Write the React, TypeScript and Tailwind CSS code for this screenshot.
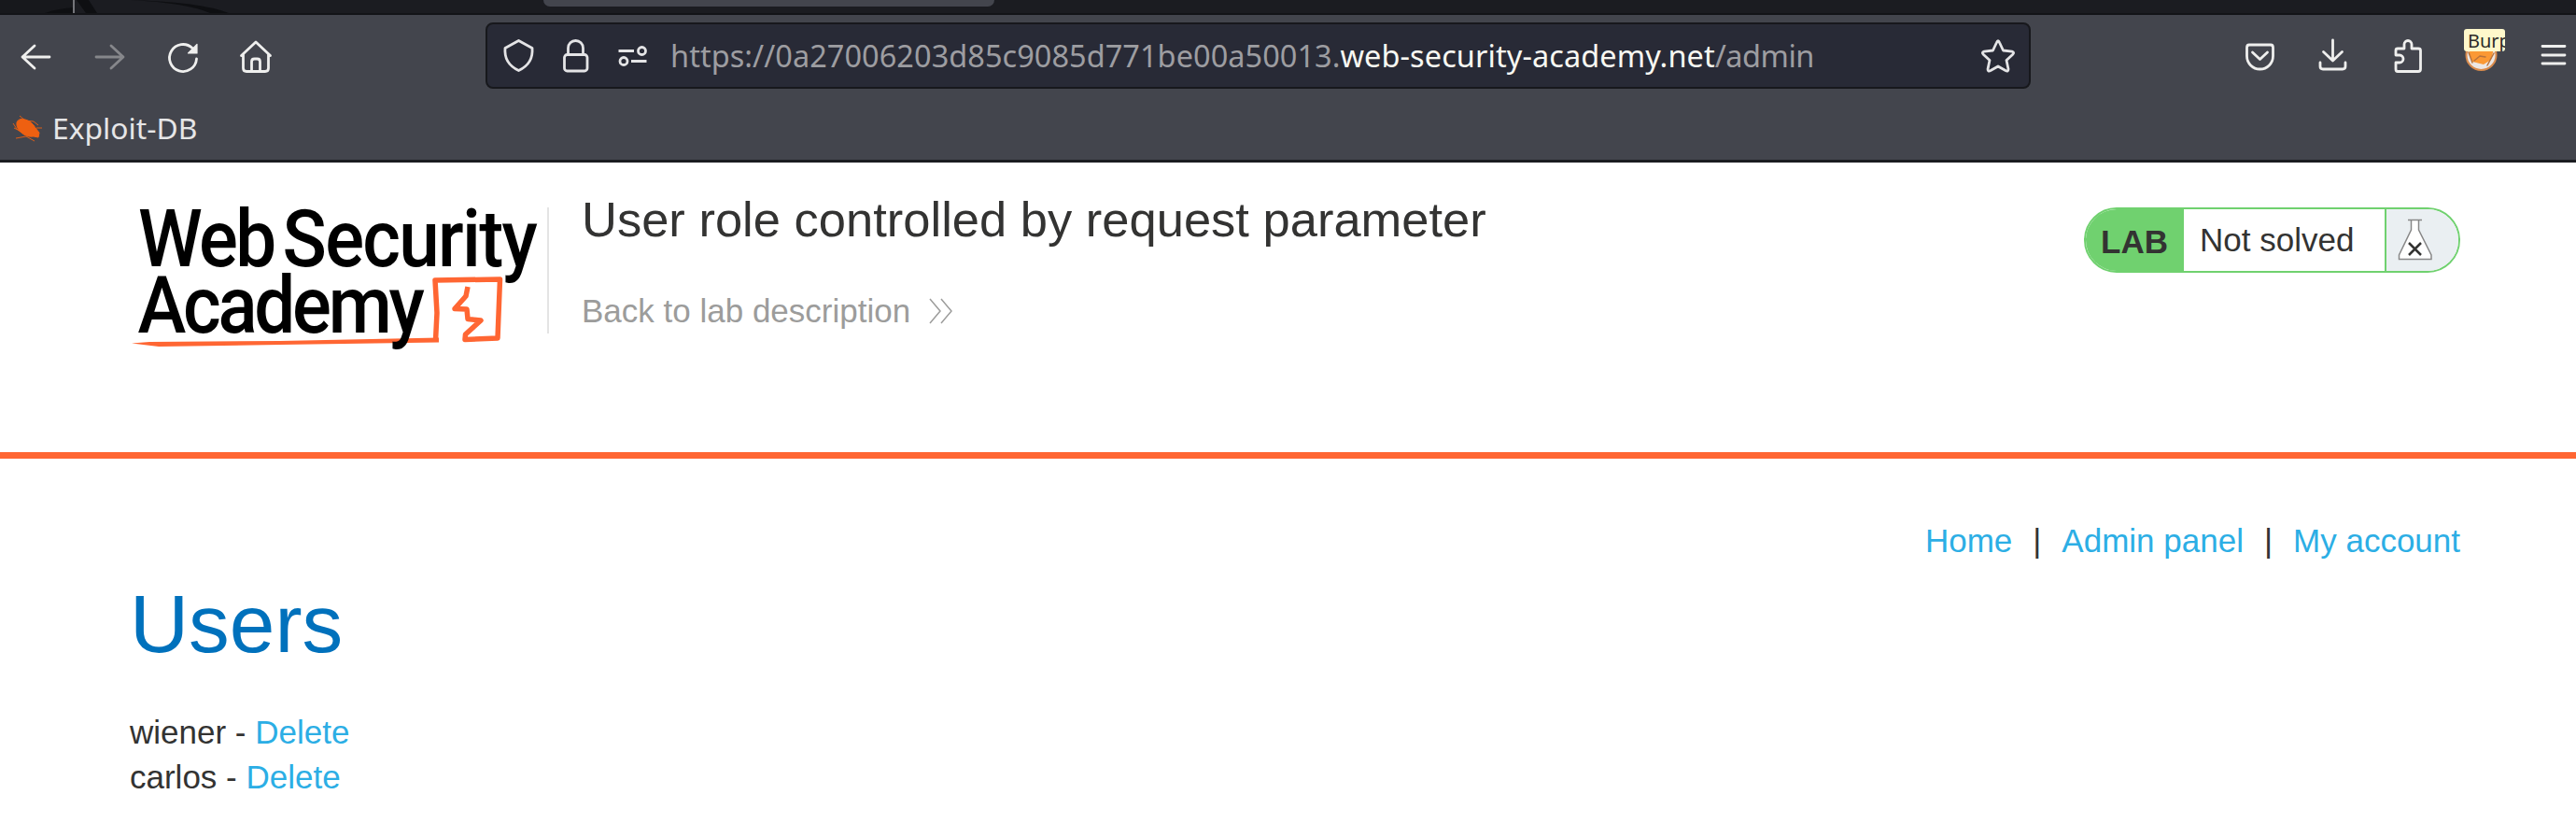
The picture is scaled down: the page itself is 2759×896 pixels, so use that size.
import React from "react";

const ic = "shrink-0 block overflow-visible";

function Logo() {
  return (
    <svg className="block shrink-0 overflow-visible" width="470" height="170" viewBox="130 205 470 170" fontFamily="Roboto, sans-serif" fontWeight="500" fontSize="85" fill="#000">
      <g transform="translate(148 285) scale(0.92 1)">
        <text x="0" y="0" textLength="161" lengthAdjust="spacing">Web</text>
        <text x="168" y="0" textLength="297" lengthAdjust="spacing">Security</text>
      </g>
      <path d="M141 367.500L160 366L300 365L470 361.500V366.500L300 369L170 371Z" fill="#ff6633" />
      <path d="M466.500 364.500L468 335L466 300L535.500 299L533 362L498 363.500L498.500 358L515 343L501 341.500L500 331L487 330.500L499 317L501 307" fill="none" stroke="#ff6633" strokeWidth="5.500" strokeLinejoin="round" />
      <g transform="translate(147.5 355.5) scale(0.92 1)">
        <text x="0" y="0" textLength="334" lengthAdjust="spacing">Academy</text>
      </g>
    </svg>
  );
}

export default function App() {
  return (
    <div className="w-[2759px] h-[896px] overflow-hidden bg-white font-['Liberation_Sans',Arial,sans-serif] text-[#333332]">
      <header className="h-[174px] bg-[#43454d] border-b-[3px] border-[#1b1d21]">
        <div className="h-4 bg-[#1b1c21] border-b-2 border-[#131418] flex">
          <svg className="block shrink-0" width="582" height="14" viewBox="0 0 582 14">
            <path d="M0 0H80V9Q60 10 48 14H0Z" fill="#17181c" />
            <path d="M82 0H95L104 14H92ZM48 14Q62 9 80 8V14ZM140 0Q215 2 245 14H225Q200 3 140 0Z" fill="#0e0f12" />
            <path d="M79 0V14" stroke="#74757a" strokeWidth="2" />
          </svg>
          <div className="w-[483px] h-[7px] bg-[#43454d] rounded-b-lg" />
        </div>
        <div className="mt-2 h-[71px] flex items-center text-[#efefee]">
          <svg className={ic} width="520" height="71" viewBox="0 24 520 71" fill="none" stroke="currentColor" strokeWidth="2.8" strokeLinecap="round" strokeLinejoin="round">
            <path d="M53 61H24M37 49L24 61L37 73" />
            <path d="M103 61H132M119 49L132 61L119 73" stroke="#86878b" />
            <path d="M210.500 63A14.500 14.500 0 1 1 206 51.500" />
            <path d="M211 47.500V57H201.500Z" fill="currentColor" strokeWidth="1.2" />
            <path d="M258.500 59.500L274 45L289.500 59.500M260.500 58V73Q260.500 76.500 264 76.500H284Q287.500 76.500 287.500 73V58M269.500 76V66Q269.500 63 272.500 63H275.500Q278.500 63 278.500 66V76" />
          </svg>
          <div className="w-[1655px] h-[71px] shrink-0 rounded-lg border-2 border-[#17181c] bg-[#282a36] flex items-center">
            <svg className={ic} width="196" height="67" viewBox="522 26 196 67" fill="none" stroke="#e4e4e6" strokeWidth="2.8" strokeLinejoin="round">
              <path d="M555.500 43.500L570 51.500Q571.500 68 555.500 75.500Q539.500 68 541 51.500Z" />
              <rect x="604.500" y="58.500" width="24.500" height="17.500" rx="3" />
              <path d="M608.500 58V51.500A8 8 0 0 1 624.500 51.500V58" />
              <path d="M662.500 54.500H679M676 65.500H692.500" />
              <circle cx="687.500" cy="54.500" r="4" />
              <circle cx="668" cy="65.500" r="4" />
            </svg>
            <span className="w-[1398px] whitespace-nowrap font-['Noto_Sans',sans-serif] text-[32.5px] leading-[44px] tracking-[0.04px] text-[#9d9da1]">
              https://0a27006203d85c9085d771be00a50013.<span className="tracking-[0.08px] text-[#f8f8f2]">web-security-academy.net</span><span className="tracking-[-0.5px]">/admin</span>
            </span>
            <svg className={ic} width="50" height="67" viewBox="2116 26 50 67" fill="none" stroke="#e4e4e6" strokeWidth="2.8" strokeLinejoin="round">
              <path d="M2138.500 45.500Q2140 42 2141.500 45.500L2145.500 54L2155 55.200Q2158 56 2155.500 58.500L2149 64.500L2151 74Q2151 77 2148 75.500L2140 71L2132 75.500Q2129 77 2129 74L2131 64.500L2124.500 58.500Q2122 56 2125 55.200L2134.500 54Z" />
            </svg>
          </div>
          <div className="relative w-[584px] h-[71px] shrink-0">
            <svg className={ic} width="584" height="71" viewBox="2175 24 584 71" fill="none" stroke="currentColor" strokeWidth="2.8" strokeLinecap="round" strokeLinejoin="round">
              <path d="M2409 48H2432Q2434.500 48 2434.500 51V60A14 14 0 0 1 2406.500 60V51Q2406.500 48 2409 48ZM2412.500 56L2420.500 63.500L2428.500 56" />
              <path d="M2498.500 43V65M2488.500 55.500L2498.500 65L2508.500 55.500M2485 67V71Q2485 74 2488 74H2509Q2512 74 2512 71V67" />
              <path d="M2566 59V54Q2566 52 2568 52H2575V47.500A4 4 0 0 1 2583 47.500V52H2590Q2592.500 52 2592.500 54V74Q2592.500 76.500 2590 76.500H2568Q2566 76.500 2566 74V67H2570A4 4 0 0 0 2570 59Z" />
              <circle cx="2657.500" cy="59" r="16" fill="#ece7e4" stroke="#d98b4c" strokeWidth="2" />
              <path d="M2647 52H2671L2668 64L2660 69L2648 66L2644 57Z" fill="#fb9934" stroke="none" />
              <path d="M2650 65L2656 60L2662 61M2644 56L2648 67M2671 57L2664 70" stroke="#b9733b" strokeWidth="1.5" />
              <path d="M2723 49.500H2747M2723 59H2747M2723 68H2747" />
            </svg>
            <span className="absolute left-[464px] top-[7px] w-[44px] h-[24px] overflow-hidden rounded-[3px] bg-[#fff8cb] pl-[4px] font-['Noto_Sans',sans-serif] text-[20px] leading-[25px] text-[#2c2b28]">Burp</span>
          </div>
        </div>
        <div className="h-[76px] pl-[12px] pt-2 flex items-center">
          <svg className={ic} width="44" height="40" viewBox="0 0 44 40" fill="#ee6011" stroke="#ee6011">
            <path d="M6 14Q8 9 15 11Q22 13 26 20L30 25L29 30L24 29Q16 30 11 25Q5 20 6 14Z" />
            <path d="M9 7L15 12L24 13L29 17M2 15L6 21L11 25M5 31L16 29L25 34M27 20H33M3 20L9 23" fill="none" strokeWidth="0.9" />
          </svg>
          <span className="whitespace-nowrap font-['Noto_Sans',sans-serif] text-[31.8px] leading-[44px] text-[#e6e6e7]">Exploit-DB</span>
        </div>
      </header>

      <section className="h-[310px] pl-[130px] pr-[124px] pt-[31px] flex items-start">
        <Logo />
        <div className="-ml-[14px] mt-[17px] w-[2px] h-[135px] bg-[#e4e4e4]" />
        <div className="ml-[35px] grow">
          <h1 className="whitespace-nowrap text-[52.5px] leading-[59px]">User role controlled by request parameter</h1>
          <a className="mt-[49px] flex items-center whitespace-nowrap text-[35px] leading-[40px] text-[#9c9c9b]">
            Back to lab description
            <svg className="ml-[20px]" width="26" height="28" viewBox="0 0 26 28" fill="none" stroke="currentColor" strokeWidth="1.5"><path d="M1 1L12 14L1 27M13 1L24 14L13 27" /></svg>
          </a>
        </div>
        <div className="mt-[17px] flex h-[70px] w-[403px] overflow-hidden rounded-full border-2 border-[#70d16f] text-[35px]">
          <div className="w-[105px] shrink-0 bg-[#70d16f] pl-[16px] pt-[2px] font-bold leading-[66px]">LAB</div>
          <div className="w-[215px] shrink-0 pl-[17px] leading-[66px] whitespace-nowrap">Not solved</div>
          <div className="grow border-l-2 border-[#70d16f] bg-[#eaeff2]">
            <svg className="block" width="60" height="66" viewBox="2556 224 60 66" fill="#fff" stroke="#888" strokeWidth="1.5">
              <path d="M2579 235.500H2594M2582.500 236V246L2569.500 273V277.500H2604V273L2590.500 246V236" />
              <path d="M2580 260L2593 273M2593 260L2580 273" stroke="#333332" strokeWidth="2.5" />
            </svg>
          </div>
        </div>
      </section>
      <div className="h-[7px] bg-[#ff6633]" />

      <main className="pl-[139px] pr-[124px] pt-[67px]">
        <nav className="flex h-[42px] items-center justify-end whitespace-nowrap text-[35px] leading-[42px] text-[#2caee5]">
          <a>Home</a>
          <span className="mx-[22px] text-[#333332]">|</span>
          <a>Admin panel</a>
          <span className="mx-[22px] text-[#333332]">|</span>
          <a>My account</a>
        </nav>
        <h2 className="mt-[18px] text-[87.4px] leading-[100px] text-[#0071bc]">Users</h2>
        <ul className="mt-[42px] text-[35px] leading-[48px]">
          <li>wiener - <a className="text-[#2caee5]">Delete</a></li>
          <li>carlos - <a className="text-[#2caee5]">Delete</a></li>
        </ul>
      </main>
    </div>
  );
}
